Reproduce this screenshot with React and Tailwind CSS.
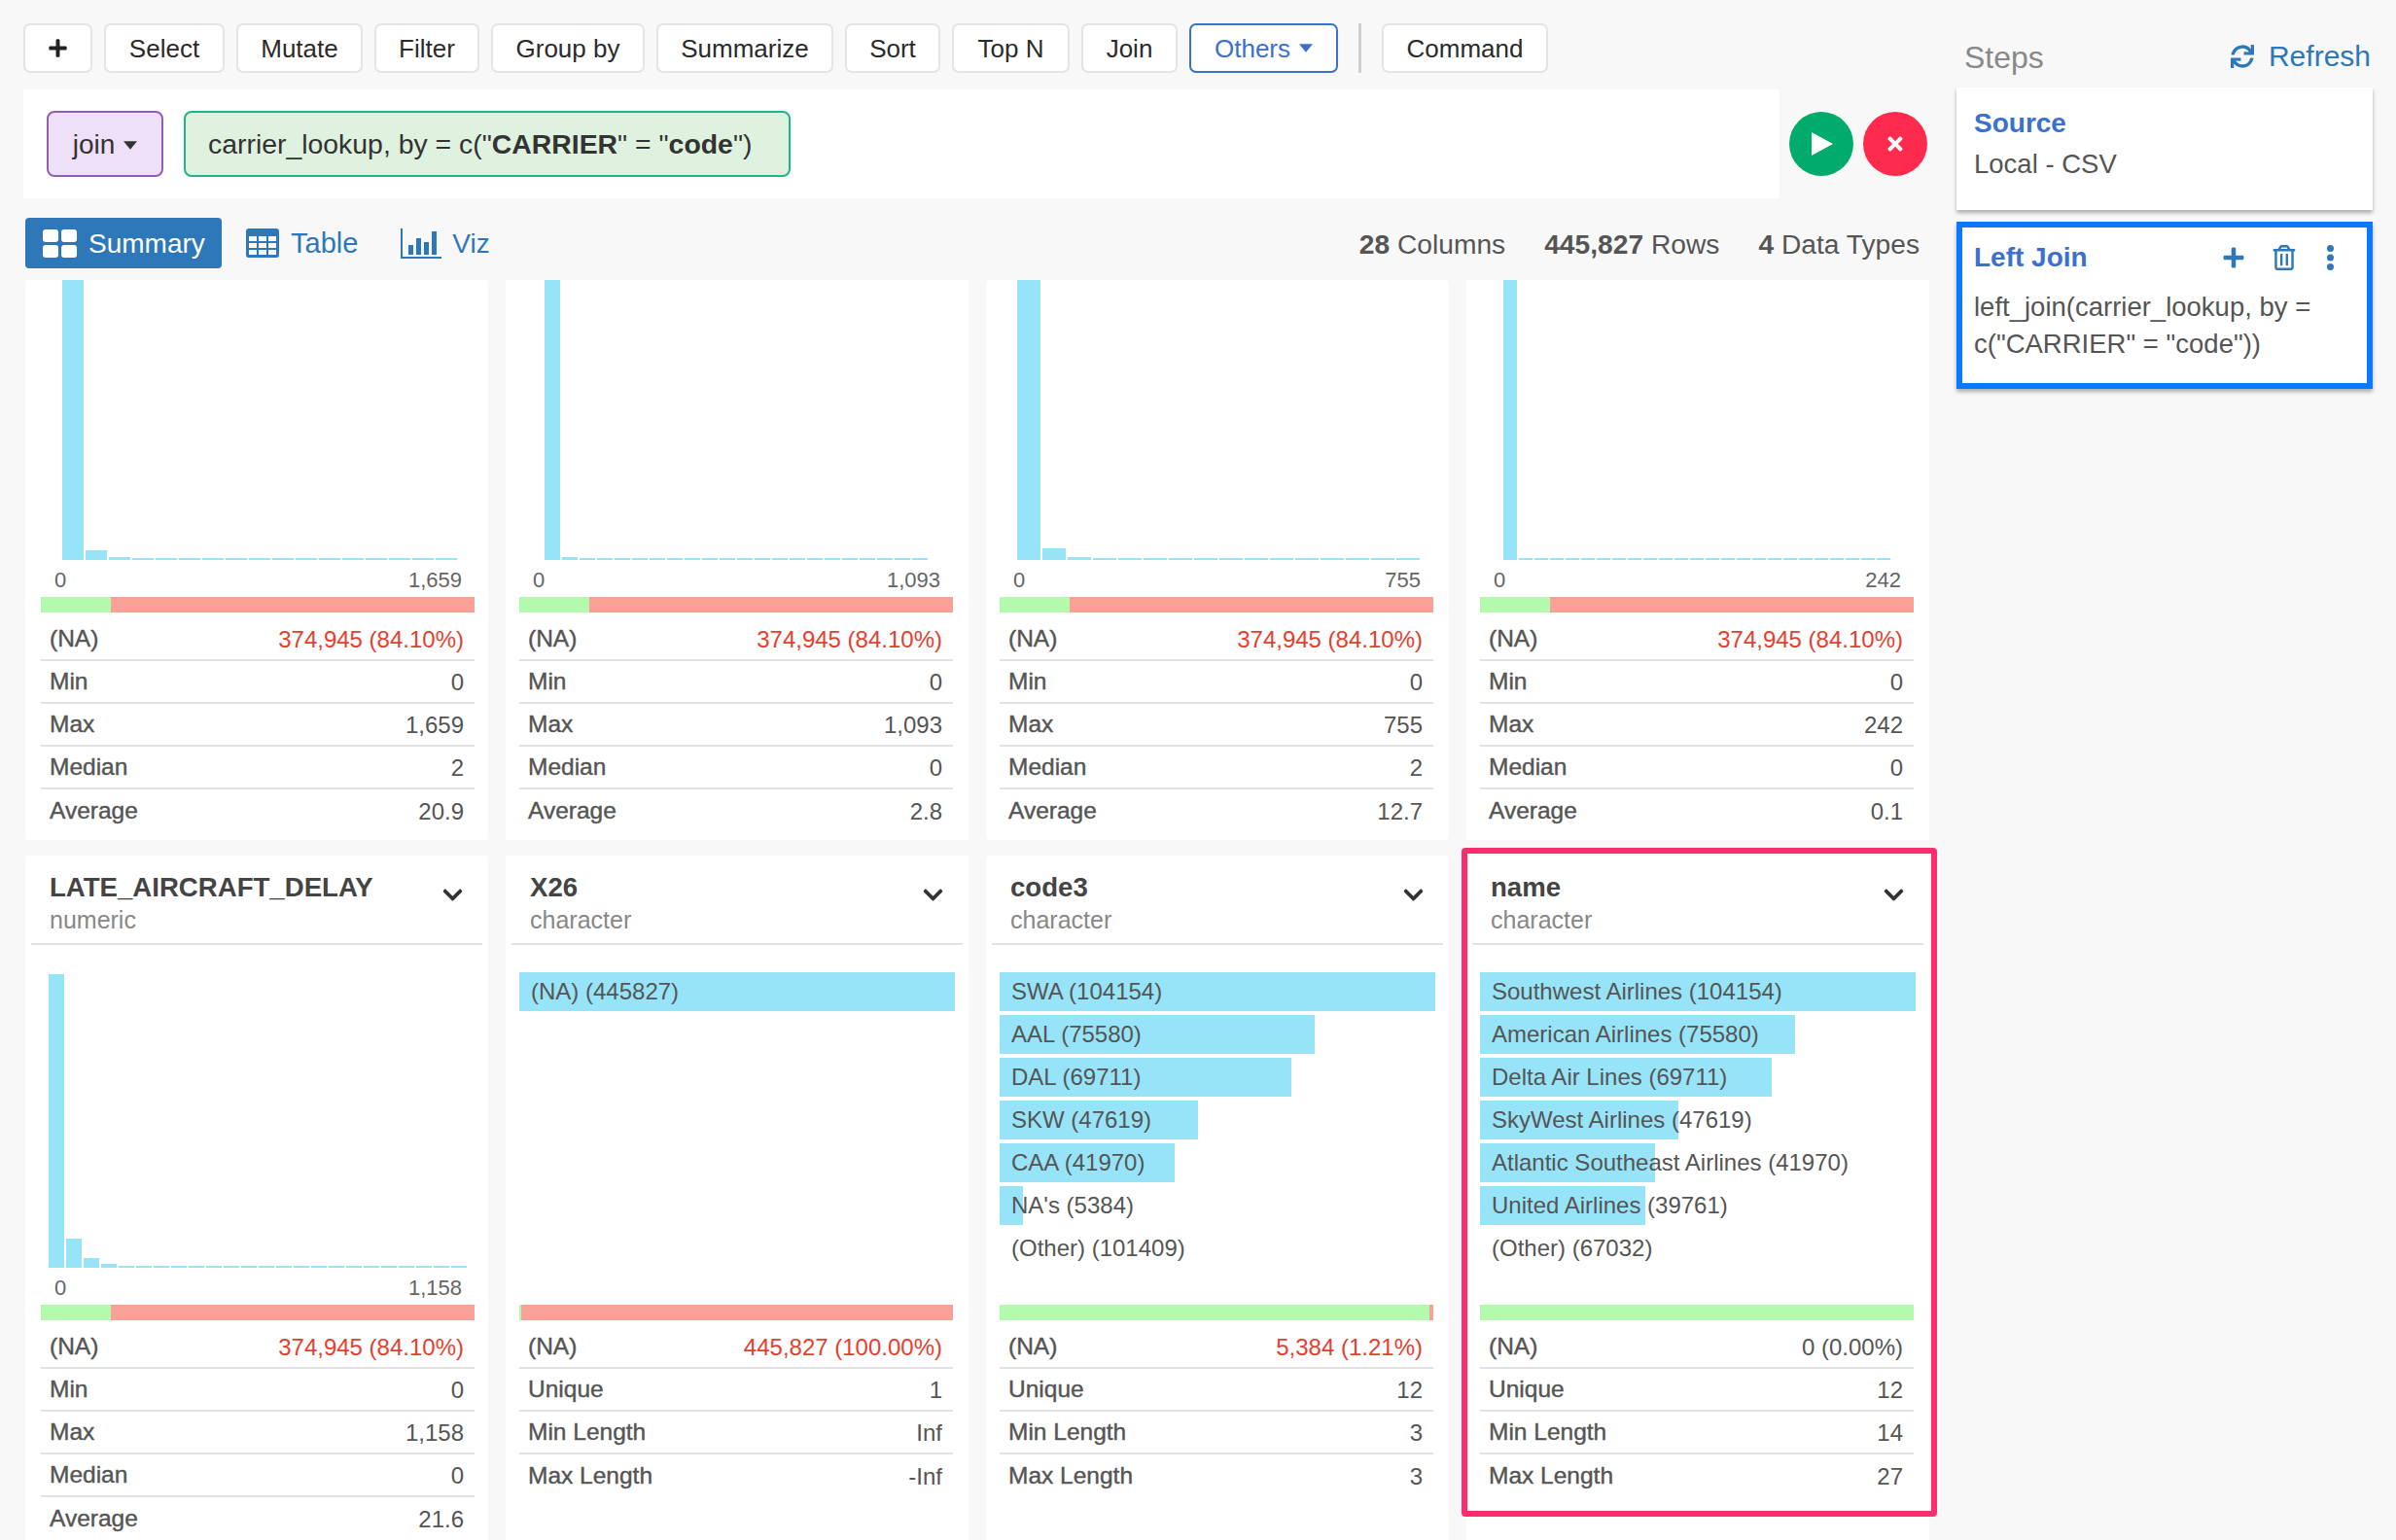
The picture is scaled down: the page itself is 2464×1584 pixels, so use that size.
import React from "react";
import { FaPlus, FaSync, FaRegTrashAlt, FaChevronDown, FaTimes } from "react-icons/fa";

const FONT = "font-['Liberation_Sans',Arial,sans-serif]";

const numericCards = [
  {
    pad: "pl-[16px]", barLeft: "ml-[22px]", barW: 22,
    bars: [288, 10, 3, ...Array(14).fill(2)],
    max: "1,659", green: 72,
    rows: [["(NA)", "374,945 (84.10%)", true], ["Min", "0"], ["Max", "1,659"], ["Median", "2"], ["Average", "20.9"]],
  },
  {
    pad: "pl-[14px]", barLeft: "ml-[26px]", barW: 16,
    bars: [288, 3, ...Array(20).fill(2)],
    max: "1,093", green: 72,
    rows: [["(NA)", "374,945 (84.10%)", true], ["Min", "0"], ["Max", "1,093"], ["Median", "0"], ["Average", "2.8"]],
  },
  {
    pad: "pl-[14px]", barLeft: "ml-[18px]", barW: 24,
    bars: [288, 12, 3, ...Array(13).fill(2)],
    max: "755", green: 72,
    rows: [["(NA)", "374,945 (84.10%)", true], ["Min", "0"], ["Max", "755"], ["Median", "2"], ["Average", "12.7"]],
  },
  {
    pad: "pl-[14px]", barLeft: "ml-[24px]", barW: 14,
    bars: [288, ...Array(24).fill(2)],
    max: "242", green: 72,
    rows: [["(NA)", "374,945 (84.10%)", true], ["Min", "0"], ["Max", "242"], ["Median", "0"], ["Average", "0.1"]],
  },
];

const x26Cats = [{ label: "(NA) (445827)", w: 448 }];
const code3Cats = [
  { label: "SWA (104154)", w: 448 },
  { label: "AAL (75580)", w: 324 },
  { label: "DAL (69711)", w: 300 },
  { label: "SKW (47619)", w: 204 },
  { label: "CAA (41970)", w: 180 },
  { label: "NA's (5384)", w: 24 },
  { label: "(Other) (101409)", w: 0 },
];
const nameCats = [
  { label: "Southwest Airlines (104154)", w: 448 },
  { label: "American Airlines (75580)", w: 324 },
  { label: "Delta Air Lines (69711)", w: 300 },
  { label: "SkyWest Airlines (47619)", w: 204 },
  { label: "Atlantic Southeast Airlines (41970)", w: 180 },
  { label: "United Airlines (39761)", w: 170 },
  { label: "(Other) (67032)", w: 0 },
];

function Caret({ className }) {
  return (
    <svg viewBox="0 0 10 6" className={className} fill="currentColor">
      <path d="M0 0h10L5 6z" />
    </svg>
  );
}

function ToolButton({ children, active, width }) {
  return (
    <button
      className={`h-[51px] rounded-[7px] border-2 bg-white flex items-center justify-center gap-[9px] ${width} ${
        active ? "border-[#3b70cf] text-[#3b70cf]" : "border-[#e4e4e4] text-[#2b2b2b]"
      }`}
    >
      {children}
    </button>
  );
}

function Histogram({ bars, width, className, height }) {
  return (
    <div className={`flex items-end gap-[2px] ${className}`} style={{ height }}>
      {bars.map((h, i) => (
        <div key={i} className="bg-[#97e4f9] shrink-0" style={{ width, height: h }} />
      ))}
    </div>
  );
}

function Axis({ max }) {
  return (
    <div className="w-[446px] h-[38px] pt-[8px] pl-[14px] pr-[13px] flex justify-between text-[22px] leading-[26px] text-[#666]">
      <span>0</span>
      <span>{max}</span>
    </div>
  );
}

function NaBar({ green, red }) {
  return (
    <div className="w-[446px] h-[16px] flex">
      <div className="bg-[#b3f9ae]" style={{ width: green }} />
      <div className="bg-[#faa197]" style={{ width: red }} />
    </div>
  );
}

function StatRows({ rows }) {
  return (
    <div className="w-[446px] mt-[6px] text-[24px] text-[#555]">
      {rows.map(([label, value, danger], i) => (
        <div
          key={label}
          className={`h-[44px] pl-[9px] pr-[11px] pt-[1px] flex items-center justify-between ${
            i < rows.length - 1 ? "border-b-2 border-[#e2e2e2]" : ""
          }`}
        >
          <span className="text-[24.5px] [-webkit-text-stroke:0.4px_#555]">{label}</span>
          <span className={danger ? "text-[#e5402f]" : ""}>{value}</span>
        </div>
      ))}
    </div>
  );
}

function CardHeader({ title, type }) {
  return (
    <div className="mx-[6px] h-[92px] border-b-2 border-[#e2e2e2] pl-[19px] pr-[19px] pt-[18px] flex justify-between">
      <div>
        <div className="text-[27.6px] leading-[30px] font-bold text-[#444]">{title}</div>
        <div className="text-[25px] leading-[30px] mt-[3px] text-[#888]">{type}</div>
      </div>
      <FaChevronDown className="w-[23px] h-[23px] mt-[11px] text-[#333]" />
    </div>
  );
}

function CategoryList({ cats }) {
  return (
    <div className="h-[370px] pt-[28px]">
      {cats.map((c) => (
        <div key={c.label} className="relative h-[40px] mb-[4px] w-[448px] flex items-center">
          <div className="absolute left-0 top-0 h-full bg-[#97e4f9]" style={{ width: c.w }} />
          <span className="relative pl-[12px] text-[24px] text-[#555]">{c.label}</span>
        </div>
      ))}
    </div>
  );
}

function CharCard({ pad, title, cats, green, red, rows, highlight }) {
  return (
    <div className="relative bg-white rounded-[4px]">
      <CardHeader title={title} type="character" />
      <div className={pad}>
        <CategoryList cats={cats} />
        <NaBar green={green} red={red} />
        <StatRows rows={rows} />
      </div>
      {highlight && (
        <div className="absolute left-[-5px] top-[-8px] w-[489px] h-[688px] border-[6px] border-[#fd2c6d] rounded-[4px] pointer-events-none" />
      )}
    </div>
  );
}

export default function App() {
  return (
    <div className={`${FONT} w-[2464px] h-[1584px] overflow-hidden bg-[#f8f8f8] flex text-[26px]`}>
      {/* main column */}
      <div className="w-[1960px] ml-[24px] shrink-0">
        <div className="mt-[24px] flex gap-[12px] leading-[30px]">
          <ToolButton width="w-[71px]">
            <FaPlus className="w-[21px] h-[21px] text-[#222]" />
          </ToolButton>
          <ToolButton width="w-[124px]">Select</ToolButton>
          <ToolButton width="w-[130px]">Mutate</ToolButton>
          <ToolButton width="w-[108px]">Filter</ToolButton>
          <ToolButton width="w-[158px]">Group by</ToolButton>
          <ToolButton width="w-[182px]">Summarize</ToolButton>
          <ToolButton width="w-[98px]">Sort</ToolButton>
          <ToolButton width="w-[121px]">Top N</ToolButton>
          <ToolButton width="w-[99px]">Join</ToolButton>
          <ToolButton width="w-[153px]" active>
            Others
            <Caret className="w-[14px] h-[9px]" />
          </ToolButton>
          <div className="w-[3px] mx-[9px] bg-[#cfcfcf]" />
          <ToolButton width="w-[171px]">Command</ToolButton>
        </div>

        <div className="mt-[17px] flex items-center gap-[10px]">
          <div className="w-[1806px] h-[112px] bg-white pl-[24px] flex items-center gap-[21px] text-[28px] text-[#333]">
            <div className="w-[120px] h-[68px] rounded-[8px] border-2 border-[#9160b3] bg-[#eee0f8] pt-[2px] flex items-center justify-center gap-[9px]">
              join
              <Caret className="w-[14px] h-[9px]" />
            </div>
            <div className="w-[624px] h-[68px] rounded-[8px] border-2 border-[#1fb584] bg-[#dff2e0] pl-[23px] flex items-center whitespace-pre text-[28.4px]">
              carrier_lookup, by = c("<b>CARRIER</b>" = "<b>code</b>")
            </div>
          </div>
          <button className="w-[66px] h-[66px] rounded-full bg-[#00ab6c] flex items-center justify-center">
            <svg viewBox="0 0 22 24" className="w-[22px] h-[24px] ml-[2px]" fill="white">
              <path d="M0 0l22 12L0 24z" />
            </svg>
          </button>
          <button className="w-[66px] h-[66px] rounded-full bg-[#ff2b4e] flex items-center justify-center">
            <FaTimes className="w-[22px] h-[22px] text-white" />
          </button>
        </div>

        <div className="mt-[20px] h-[52px] pl-[2px] pr-[10px] flex items-center justify-between text-[28px] text-[#2e77b8]">
          <div className="flex items-center">
            <div className="w-[202px] h-[52px] rounded-[4px] bg-[#2e77b8] text-white pl-[18px] flex items-center gap-[12px]">
              <svg viewBox="0 0 35 29" className="w-[35px] h-[29px]" fill="white">
                <rect width="16" height="13" rx="3" />
                <rect x="19" width="16" height="13" rx="3" />
                <rect y="16" width="16" height="13" rx="3" />
                <rect x="19" y="16" width="16" height="13" rx="3" />
              </svg>
              <span className="pt-[2px]">Summary</span>
            </div>
            <svg viewBox="0 0 34 30" className="w-[34px] h-[30px] ml-[25px]" fill="#2e77b8">
              <path
                fillRule="evenodd"
                d="M3 0h28a3 3 0 013 3v24a3 3 0 01-3 3H3a3 3 0 01-3-3V3a3 3 0 013-3zM3 8v5h8V8zm10 0v5h8V8zm10 0v5h8V8zM3 15v5h8v-5zm10 0v5h8v-5zm10 0v5h8v-5zM3 22v5h8v-5zm10 0v5h8v-5zm10 0v5h8v-5z"
              />
            </svg>
            <span className="ml-[12px] pt-[2px] text-[29px]">Table</span>
            <svg viewBox="0 0 42 31" className="w-[42px] h-[31px] ml-[44px]" fill="#2e77b8">
              <path d="M0 0h2v29h40v2H0z" />
              <rect x="8" y="17" width="5" height="10" />
              <rect x="16" y="10" width="5" height="17" />
              <rect x="24" y="14" width="5" height="13" />
              <rect x="32" y="3" width="5" height="24" />
            </svg>
            <span className="ml-[11px] pt-[2px]">Viz</span>
          </div>
          <div className="flex gap-[40px] pt-[3px] text-[28.2px] text-[#555]">
            <span>
              <b>28</b> Columns
            </span>
            <span>
              <b>445,827</b> Rows
            </span>
            <span>
              <b>4</b> Data Types
            </span>
          </div>
        </div>

        <div className="mt-[12px] ml-[2px] grid grid-cols-[repeat(4,476px)] grid-rows-[576px_720px] gap-x-[18px] gap-y-[16px]">
          {numericCards.map((c) => (
            <div key={c.max} className={`bg-white rounded-[4px] ${c.pad}`}>
              <Histogram bars={c.bars} width={c.barW} className={c.barLeft} height={288} />
              <Axis max={c.max} />
              <NaBar green={c.green} red={374} />
              <StatRows rows={c.rows} />
            </div>
          ))}

          <div className="bg-white rounded-[4px]">
            <CardHeader title="LATE_AIRCRAFT_DELAY" type="numeric" />
            <div className="pl-[16px]">
              <div className="h-[370px] pt-[30px]">
                <Histogram bars={[302, 30, 10, 4, ...Array(20).fill(2)]} width={16} className="ml-[8px]" height={302} />
                <Axis max="1,158" />
              </div>
              <NaBar green={72} red={374} />
              <StatRows
                rows={[["(NA)", "374,945 (84.10%)", true], ["Min", "0"], ["Max", "1,158"], ["Median", "0"], ["Average", "21.6"]]}
              />
            </div>
          </div>

          <CharCard
            pad="pl-[14px]"
            title="X26"
            cats={x26Cats}
            green={2}
            red={444}
            rows={[["(NA)", "445,827 (100.00%)", true], ["Unique", "1"], ["Min Length", "Inf"], ["Max Length", "-Inf"]]}
          />
          <CharCard
            pad="pl-[14px]"
            title="code3"
            cats={code3Cats}
            green={442}
            red={4}
            rows={[["(NA)", "5,384 (1.21%)", true], ["Unique", "12"], ["Min Length", "3"], ["Max Length", "3"]]}
          />
          <CharCard
            pad="pl-[14px]"
            title="name"
            cats={nameCats}
            green={446}
            red={0}
            rows={[["(NA)", "0 (0.00%)"], ["Unique", "12"], ["Min Length", "14"], ["Max Length", "27"]]}
            highlight
          />
        </div>
      </div>

      {/* steps sidebar */}
      <div className="w-[428px] ml-[28px] pt-[30px] shrink-0">
        <div className="h-[60px] pl-[8px] pr-[2px] flex justify-between">
          <span className="text-[32px] leading-[58px] text-[#888]">Steps</span>
          <span className="flex items-center gap-[15px] h-[56px] pb-[1px] text-[30px] text-[#2e77b8]">
            <FaSync className="w-[24px] h-[24px]" />
            Refresh
          </span>
        </div>
        <div className="h-[126px] bg-white pl-[18px] pt-[20px] shadow-[0_3px_4px_rgba(0,0,0,0.3)] text-[#555]">
          <div className="text-[28px] leading-[34px] font-bold text-[#3b70cf]">Source</div>
          <div className="mt-[8px] text-[27.5px] leading-[34px]">Local - CSV</div>
        </div>
        <div className="mt-[12px] h-[172px] bg-white border-[6px] border-[#0a78ff] pl-[12px] pt-[14px] shadow-[0_3px_4px_rgba(0,0,0,0.3)] text-[#555]">
          <div className="h-[34px] flex items-center justify-between text-[28px] font-bold text-[#3b70cf]">
            Left Join
            <div className="flex items-center text-[#2e77b8]">
              <FaPlus className="w-[24px] h-[24px]" />
              <FaRegTrashAlt className="w-[24px] h-[26px] ml-[28px]" />
              <svg viewBox="0 0 7 26" className="w-[7px] h-[26px] ml-[32px] mr-[34px]" fill="currentColor">
                <circle cx="3.5" cy="3.5" r="3.5" />
                <circle cx="3.5" cy="13" r="3.5" />
                <circle cx="3.5" cy="22.5" r="3.5" />
              </svg>
            </div>
          </div>
          <div className="mt-[15px] text-[27.5px] leading-[38px]">
            left_join(carrier_lookup, by =
            <br />
            c("CARRIER" = "code"))
          </div>
        </div>
      </div>
    </div>
  );
}
